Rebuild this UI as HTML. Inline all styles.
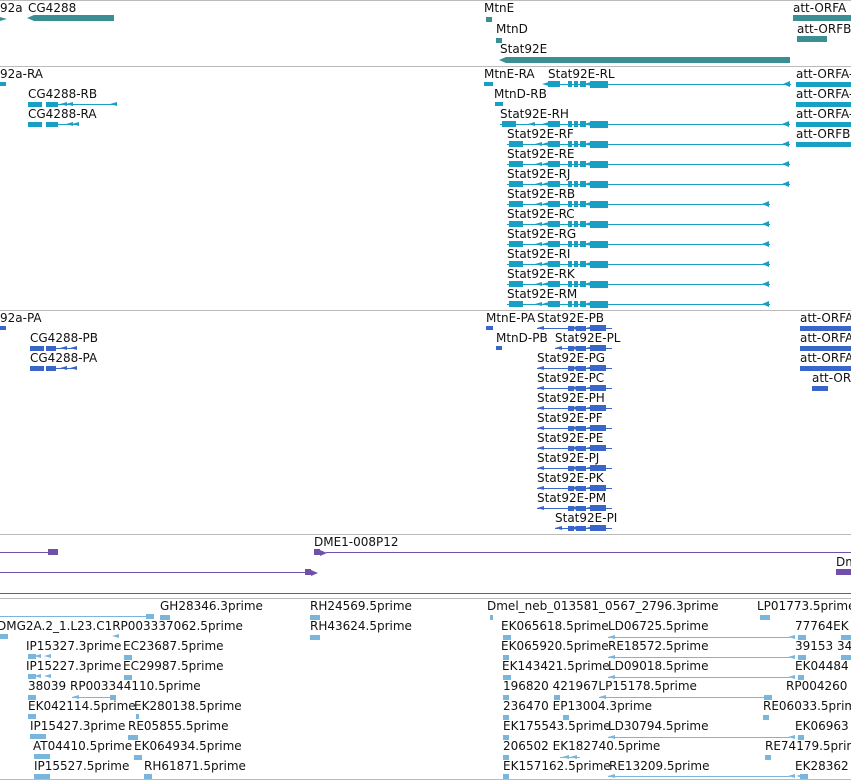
<!DOCTYPE html>
<html><head><meta charset="utf-8"><style>
body{margin:0;width:851px;height:782px;overflow:hidden;background:#fff;position:relative;font-family:"DejaVu Sans","Liberation Sans",sans-serif;font-size:12px;color:#111}
.t{position:absolute;white-space:nowrap;line-height:13px}
.b{position:absolute}
</style></head><body>
<script>
var H='';
function T(x,y,s){H+='<div class="t" style="left:'+x+'px;top:'+y+'px">'+s+'</div>';}
function R(x,y,w,h,c){H+='<div class="b" style="left:'+x+'px;top:'+y+'px;width:'+w+'px;height:'+h+'px;background:'+c+'"></div>';}
function L(x1,x2,y,c){R(x1,y,x2-x1,1,c);}
function A(x,y,c,dir,h){h=h||7;// arrowhead
 H+='<div class="b" style="left:'+x+'px;top:'+(y-h/2+0.5)+'px;width:0;height:0;border-top:'+(h/2)+'px solid transparent;border-bottom:'+(h/2)+'px solid transparent;'+(dir<0?'border-right:7px solid '+c:'border-left:7px solid '+c)+'"></div>';}
function BL(x,w,y,c,h){h=h||5;R(x,y-(h>>1),w,h,c);}
var G='#e0e0e0';
// section borders
L(0,851,0,'#bbb');L(0,851,66,'#bbb');L(0,851,310,'#bbb');L(0,851,534,'#bbb');L(0,851,598,'#bbb');L(0,851,779,'#bbb');
// genes teal
var tc='#3b8f92';
T(0,2,'92a');A(0,19,tc,1,5);
T(28,2,'CG4288');BL(34,80,18,tc,6);A(27,18,tc,-1,7);
T(484,2,'MtnE');BL(486,6,19,tc,5);
T(496,23,'MtnD');BL(496,6,40,tc,5);
T(500,43,'Stat92E');BL(506,284,60,tc,6);A(499,60,tc,-1,7);
T(793,2,'att-ORFA');BL(793,58,18,tc,6);
T(797,23,'att-ORFB');BL(797,30,39,tc,6);
// transcripts
var cc='#17a0c4';
function stat(x0,y,end){L(x0,end,y,cc);BL(548,12,y,cc,6);BL(568,4,y,cc,6);BL(574,4,y,cc,6);BL(580,6,y,cc,6);BL(590,18,y,cc,7);A(end-8,y,cc,-1,7);A(584,y,cc,-1,5);A(542,y,cc,-1,5);}
T(0,68,'92a-RA');BL(0,6,84,cc,4);
T(28,88,'CG4288-RB');BL(28,14,104,cc,5);BL(46,12,104,cc,5);L(58,117,104,cc);A(110,104,cc,-1,5);A(60,104,cc,-1,5);A(66,104,cc,-1,5);
T(28,108,'CG4288-RA');BL(28,14,124,cc,5);BL(46,12,124,cc,5);L(58,78,124,cc);A(66,124,cc,-1,5);A(72,124,cc,-1,5);
T(484,68,'MtnE-RA');BL(484,9,84,cc,4);
T(548,68,'Stat92E-RL');stat(548,84,791);
T(494,88,'MtnD-RB');BL(495,8,104,cc,4);
var rows=[['RH',500,108,790],['RF',507,128,790],['RE',507,148,790],['RJ',507,168,790],['RB',507,188,770],['RC',507,208,770],['RG',507,228,770],['RI',507,248,770],['RK',507,268,770],['RM',507,288,770]];
rows.forEach(function(r){T(r[1],r[2],'Stat92E-'+r[0]);var y=r[2]+16;stat(r[1],y,r[3]);BL(r[1]+2,14,y,cc,6);A(r[1]+28,y,cc,-1,5);});
['att-ORFA-','att-ORFA-','att-ORFA-','att-ORFB-'].forEach(function(s,i){var y=68+i*20;T(796,y,s);var fy=y+16;BL(796,55,fy,cc,5);if(i<3)L(796,851,fy,cc);A(800,fy,cc,-1,5);A(808,fy,cc,-1,5);A(816,fy,cc,-1,5);});
// proteins
var pc='#3a66cc';
T(0,312,'92a-PA');BL(0,6,328,pc,4);
T(30,332,'CG4288-PB');BL(30,14,348,pc,5);BL(46,10,348,pc,5);L(56,77,348,pc);A(60,348,pc,-1,5);A(70,348,pc,-1,5);
T(30,352,'CG4288-PA');BL(30,14,368,pc,5);BL(46,10,368,pc,5);L(56,77,368,pc);A(60,368,pc,-1,5);A(70,368,pc,-1,5);
T(486,312,'MtnE-PA');BL(486,7,328,pc,4);
T(496,332,'MtnD-PB');BL(496,6,348,pc,4);
function prot(x0,y){L(x0,612,y,pc);A(x0,y,pc,-1,5);BL(568,6,y,pc,5);BL(576,10,y,pc,5);BL(590,16,y,pc,6);A(586,y,pc,-1,5);A(570,y,pc,-1,5);}
T(537,312,'Stat92E-PB');prot(537,328);
T(555,332,'Stat92E-PL');prot(555,348);
['PG','PC','PH','PF','PE','PJ','PK','PM'].forEach(function(s,i){var y=352+i*20;T(537,y,'Stat92E-'+s);prot(537,y+16);});
T(555,512,'Stat92E-PI');prot(555,528);
['att-ORFA','att-ORFA','att-ORFA'].forEach(function(s,i){var y=312+i*20;T(800,y,s);BL(800,51,y+16,pc,5);A(804,y+16,pc,-1,5);A(812,y+16,pc,-1,5);});
T(812,372,'att-ORF');BL(812,16,388,pc,5);A(816,388,pc,-1,5);
// BAC purple
var vc='#7050a8';
L(0,50,552,vc);BL(48,10,552,vc,6);
L(0,308,572,vc);BL(305,6,572,vc,6);A(311,572,vc,1,6);
T(314,536,'DME1-008P12');BL(314,6,552,vc,6);A(320,552,vc,1,6);L(326,851,552,vc);
T(836,556,'Dm');BL(836,15,572,vc,6);
L(0,851,593,vc);
// ESTs
var ec='#7ab5de';
var E=[
[0,[[160,'GH28346.3prime'],[310,'RH24569.5prime'],[487,'Dmel_neb_013581_0567_2796.3prime'],[757,'LP01773.5prime']]],
[1,[[-3,'DMG2A.2_1.L23.C1RP003337062.5prime'],[310,'RH43624.5prime'],[501,'EK065618.5prime'],[608,'LD06725.5prime'],[795,'77764EK']]],
[2,[[26,'IP15327.3prime'],[123,'EC23687.5prime'],[501,'EK065920.5prime'],[608,'RE18572.5prime'],[795,'39153 34']]],
[3,[[26,'IP15227.3prime'],[123,'EC29987.5prime'],[502,'EK143421.5prime'],[608,'LD09018.5prime'],[795,'EK04484']]],
[4,[[28,'38039 RP003344110.5prime'],[503,'196820 421967LP15178.5prime'],[786,'RP004260']]],
[5,[[28,'EK042114.5prime'],[134,'EK280138.5prime'],[503,'236470 EP13004.3prime'],[763,'RE06033.5prime']]],
[6,[[30,'IP15427.3prime'],[128,'RE05855.5prime'],[503,'EK175543.5prime'],[608,'LD30794.5prime'],[795,'EK06963']]],
[7,[[33,'AT04410.5prime'],[134,'EK064934.5prime'],[503,'206502 EK182740.5prime'],[765,'RE74179.5prime']]],
[8,[[34,'IP15527.5prime'],[144,'RH61871.5prime'],[503,'EK157162.5prime'],[609,'RE13209.5prime'],[795,'EK28362']]]];
E.forEach(function(r){var y=600+r[0]*20;r[1].forEach(function(l){T(l[0],y,l[1]);});});
function ea(x,y,d){A(x,y,ec,d,5);}
function eb(x,w,y){BL(x,w,y,ec,5);}
// row features
L(0,152,616,ec);eb(146,8,616);eb(160,10,617);eb(310,10,617);eb(490,3,617);eb(760,10,617);
eb(0,8,636);ea(112,636,-1);eb(310,10,637);eb(503,8,637);L(608,790,637,ec);ea(608,637,-1);ea(788,637,-1);eb(798,8,637);eb(841,10,637);
eb(28,8,656);ea(34,656,-1);ea(44,656,-1);eb(124,8,657);eb(503,6,657);L(608,790,657,ec);ea(608,657,-1);ea(788,657,-1);eb(798,8,657);eb(841,10,657);
eb(28,8,676);ea(34,676,-1);ea(44,676,-1);eb(124,8,677);eb(503,8,677);L(608,790,677,ec);ea(608,677,-1);ea(788,677,-1);eb(798,6,677);
eb(28,8,697);L(72,116,697,ec);ea(72,697,-1);eb(110,6,697);eb(503,6,697);eb(554,6,697);L(599,770,697,ec);ea(599,697,-1);eb(764,8,697);
eb(28,8,716);eb(136,3,716);eb(503,6,717);eb(563,6,717);eb(763,6,717);
eb(30,16,736);ea(38,736,-1);eb(128,10,737);eb(503,6,737);L(608,790,737,ec);ea(608,737,-1);ea(788,737,-1);eb(798,6,737);
eb(34,16,756);ea(40,756,-1);eb(134,8,757);eb(503,6,757);L(560,580,757,ec);ea(562,757,-1);ea(570,757,-1);eb(765,6,757);
eb(34,16,776);ea(36,776,-1);eb(144,8,776);eb(503,6,776);L(608,790,776,ec);ea(608,776,-1);ea(788,776,-1);ea(796,776,-1);eb(800,8,776);
document.write(H);
</script>
</body></html>
